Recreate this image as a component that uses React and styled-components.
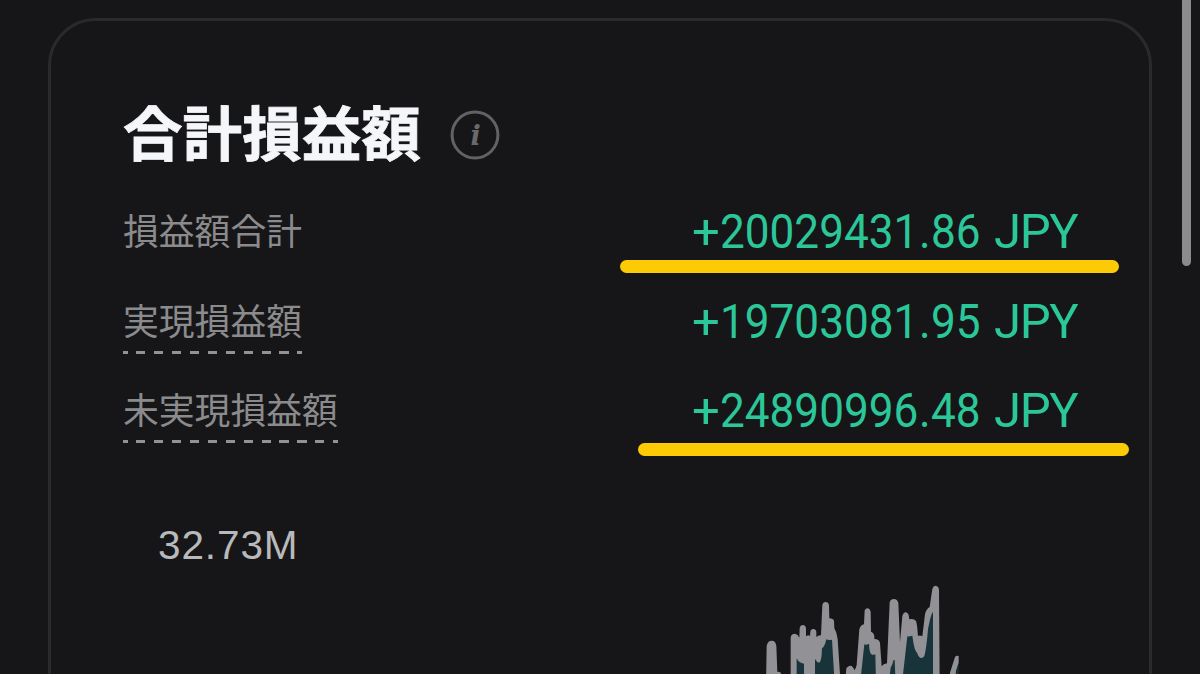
import React from "react";
import styled, { createGlobalStyle } from "styled-components";

const rows = [
  {
    label: "損益額合計",
    whole: "20029431",
    decimals: "86",
    marker: { left: 497, top: 53, width: 499 },
  },
  { label: "実現損益額", whole: "19703081", decimals: "95", hint: true },
  {
    label: "未実現損益額",
    whole: "24890996",
    decimals: "48",
    hint: true,
    marker: { left: 515, top: 57, width: 491 },
  },
];

const peaks = [
  "M78 340 L80 225 Q83 209 95 209 Q107 209 109 225 L112 303 Q124 300 125 315 V340Z",
  "M152 340 V200 Q153 188 165 188 Q174 190 178 200 L179 172 Q181 162 189 162 Q197 163 198 172 V196 Q207 190 210 196 L211 182 Q212 173 220 174 Q229 175 229 184 V198 Q235 192 243 193 L247 102 Q249 93 257 93 Q267 94 267 105 L268 142 Q280 142 282 150 L283 172 Q291 185 293 205 L302 340Z",
  "M315 340 L319 292 Q326 281 335 285 Q342 290 343 298 Q348 292 350 282 L358 175 Q362 161 372 160 L374 118 Q378 111 384 112 Q391 114 392 122 L393 182 Q402 185 403 196 V204 Q418 204 420 216 L425 286 Q430 278 441 277 L449 94 Q452 84 462 84 Q472 85 475 95 L480 214 L487 135 Q491 123 498 124 Q507 126 508 145 Q522 142 528 150 Q531 156 534 195 Q540 192 547 196 L555 130 Q558 115 569 108 L577 54 Q580 44 587 44 Q596 46 597 56 L599 340Z",
  "M627 340 L630 305 L645 258 Q650 252 656 255 V275 L648 300 L645 340Z",
];

const areas = [
  "M170 340 V262 Q176 276 192 278 V340Z",
  "M225 340 V264 Q230 274 238 275 Q245 272 246 232 Q254 228 259 205 Q267 209 276 206 L284 340Z",
  "M360 340 L373 220 Q379 223 387 218 Q388 245 394 250 Q400 253 406 250 L408 340Z",
  "M446 340 L452 290 Q458 282 460 268 L464 267 L467 340Z",
  "M487 340 L489 310 L502 196 Q508 197 517 194 Q523 240 531 245 Q537 262 545 261 Q552 260 554 252 Q560 225 564 175 Q572 130 579 122 V340Z",
  "M645 340 L650 300 L656 280 V340Z",
];

function ChartPreview() {
  return (
    <Chart viewBox="0 0 720 312">
      {peaks.map((d) => (
        <path key={d} className="peak" d={d} />
      ))}
      {areas.map((d) => (
        <path key={d} className="area" d={d} />
      ))}
    </Chart>
  );
}

function App() {
  return (
    <Page>
      <GlobalStyle />
      <Card>
        <Header>
          <Title>合計損益額</Title>
          <InfoIcon viewBox="0 0 50 50">
            <circle cx="25" cy="25" r="22.9" />
            <text x="25.6" y="35">
              i
            </text>
          </InfoIcon>
        </Header>

        <Rows>
          {rows.map((row) => (
            <Row key={row.label}>
              <Label $hint={row.hint}>{row.label}</Label>
              <Amount>
                <Sign>+</Sign>
                <Digits $width={199}>{row.whole}</Digits>
                <Digits $width={12}>.</Digits>
                <Digits $width={63}>{row.decimals}</Digits>
                <Unit>JPY</Unit>
              </Amount>
              {row.marker && (
                <Marker
                  $left={row.marker.left}
                  $top={row.marker.top}
                  $width={row.marker.width}
                />
              )}
            </Row>
          ))}
        </Rows>

        <AxisLabel>32.73M</AxisLabel>
        <ChartPreview />
      </Card>
      <Scrollbar />
    </Page>
  );
}

const GlobalStyle = createGlobalStyle`
  body {
    margin: 0;
    background: #161618;
    overflow: hidden;
  }
`;

const Page = styled.div`
  display: flex;
  justify-content: space-between;
  box-sizing: border-box;
  width: 1200px;
  height: 674px;
  padding-left: 48px;
  padding-right: 9px;
  overflow: hidden;
  background: #161618;
  font-family: "Noto Sans CJK JP", sans-serif;
`;

const Card = styled.main`
  box-sizing: border-box;
  width: 1104px;
  height: 760px;
  margin-top: 18px;
  padding: 81px 72px 0;
  border: 3px solid #2a2a2c;
  border-radius: 48px;
`;

const Header = styled.header`
  display: flex;
  align-items: center;
  height: 66px;
`;

const Title = styled.h1`
  margin: 0;
  padding-bottom: 10px;
  color: #f5f6fa;
  font-size: 59.6px;
  font-weight: 700;
  line-height: 66px;
  -webkit-text-stroke: 0.8px #f5f6fa;
`;

const InfoIcon = styled.svg`
  width: 50px;
  height: 50px;
  margin-left: 29px;

  circle {
    fill: none;
    stroke: #626264;
    stroke-width: 3;
  }
  text {
    fill: #6a6a6c;
    font: italic 700 27px "DejaVu Serif", serif;
    text-anchor: middle;
  }
`;

const Rows = styled.div`
  margin-top: 39px;
`;

const Row = styled.div`
  position: relative;
  display: flex;
  justify-content: space-between;
  height: 89.6px;
`;

const Label = styled.div`
  height: 57px;
  color: #8b8b8e;
  font-size: 35.8px;
  font-weight: 400;
  line-height: 44px;
  background: ${(props) =>
    props.$hint
      ? "repeating-linear-gradient(90deg, #929295 0 4.6px, transparent 4.6px 13.3px, #929295 13.3px 17.9px) left bottom / 100% 3px no-repeat"
      : "none"};
`;

const Amount = styled.div`
  display: flex;
  height: 50px;
  margin-right: 0;
  color: #2cc798;
  font-family: Roboto, sans-serif;
  font-size: 49px;
  line-height: 50px;
  white-space: nowrap;
`;

const Sign = styled.span`
  width: 28px;
`;

const Digits = styled.span`
  width: ${(props) => props.$width}px;
  transform: scaleX(0.9);
  transform-origin: left;
`;

const Unit = styled.span`
  width: 83px;
  letter-spacing: -1.4px;
`;

const Marker = styled.div`
  position: absolute;
  left: ${(props) => props.$left}px;
  top: ${(props) => props.$top}px;
  width: ${(props) => props.$width}px;
  height: 13px;
  border-radius: 7px;
  background: #fdcb06;
`;

const AxisLabel = styled.div`
  height: 50px;
  margin: 45px 0 0 35px;
  color: #b9b9bb;
  font-family: "Liberation Sans", Arial, sans-serif;
  font-size: 40.5px;
  line-height: 48px;
  letter-spacing: 0.9px;
`;

const Chart = styled.svg`
  display: block;
  width: 240px;
  height: 104px;
  margin-left: 617px;

  .area {
    fill: #18343a;
  }
  .peak {
    fill: #929196;
  }
`;

const Scrollbar = styled.div`
  width: 9px;
  height: 266px;
  border-radius: 0 0 5px 5px;
  background: #8b8b8d;
`;

export default App;
